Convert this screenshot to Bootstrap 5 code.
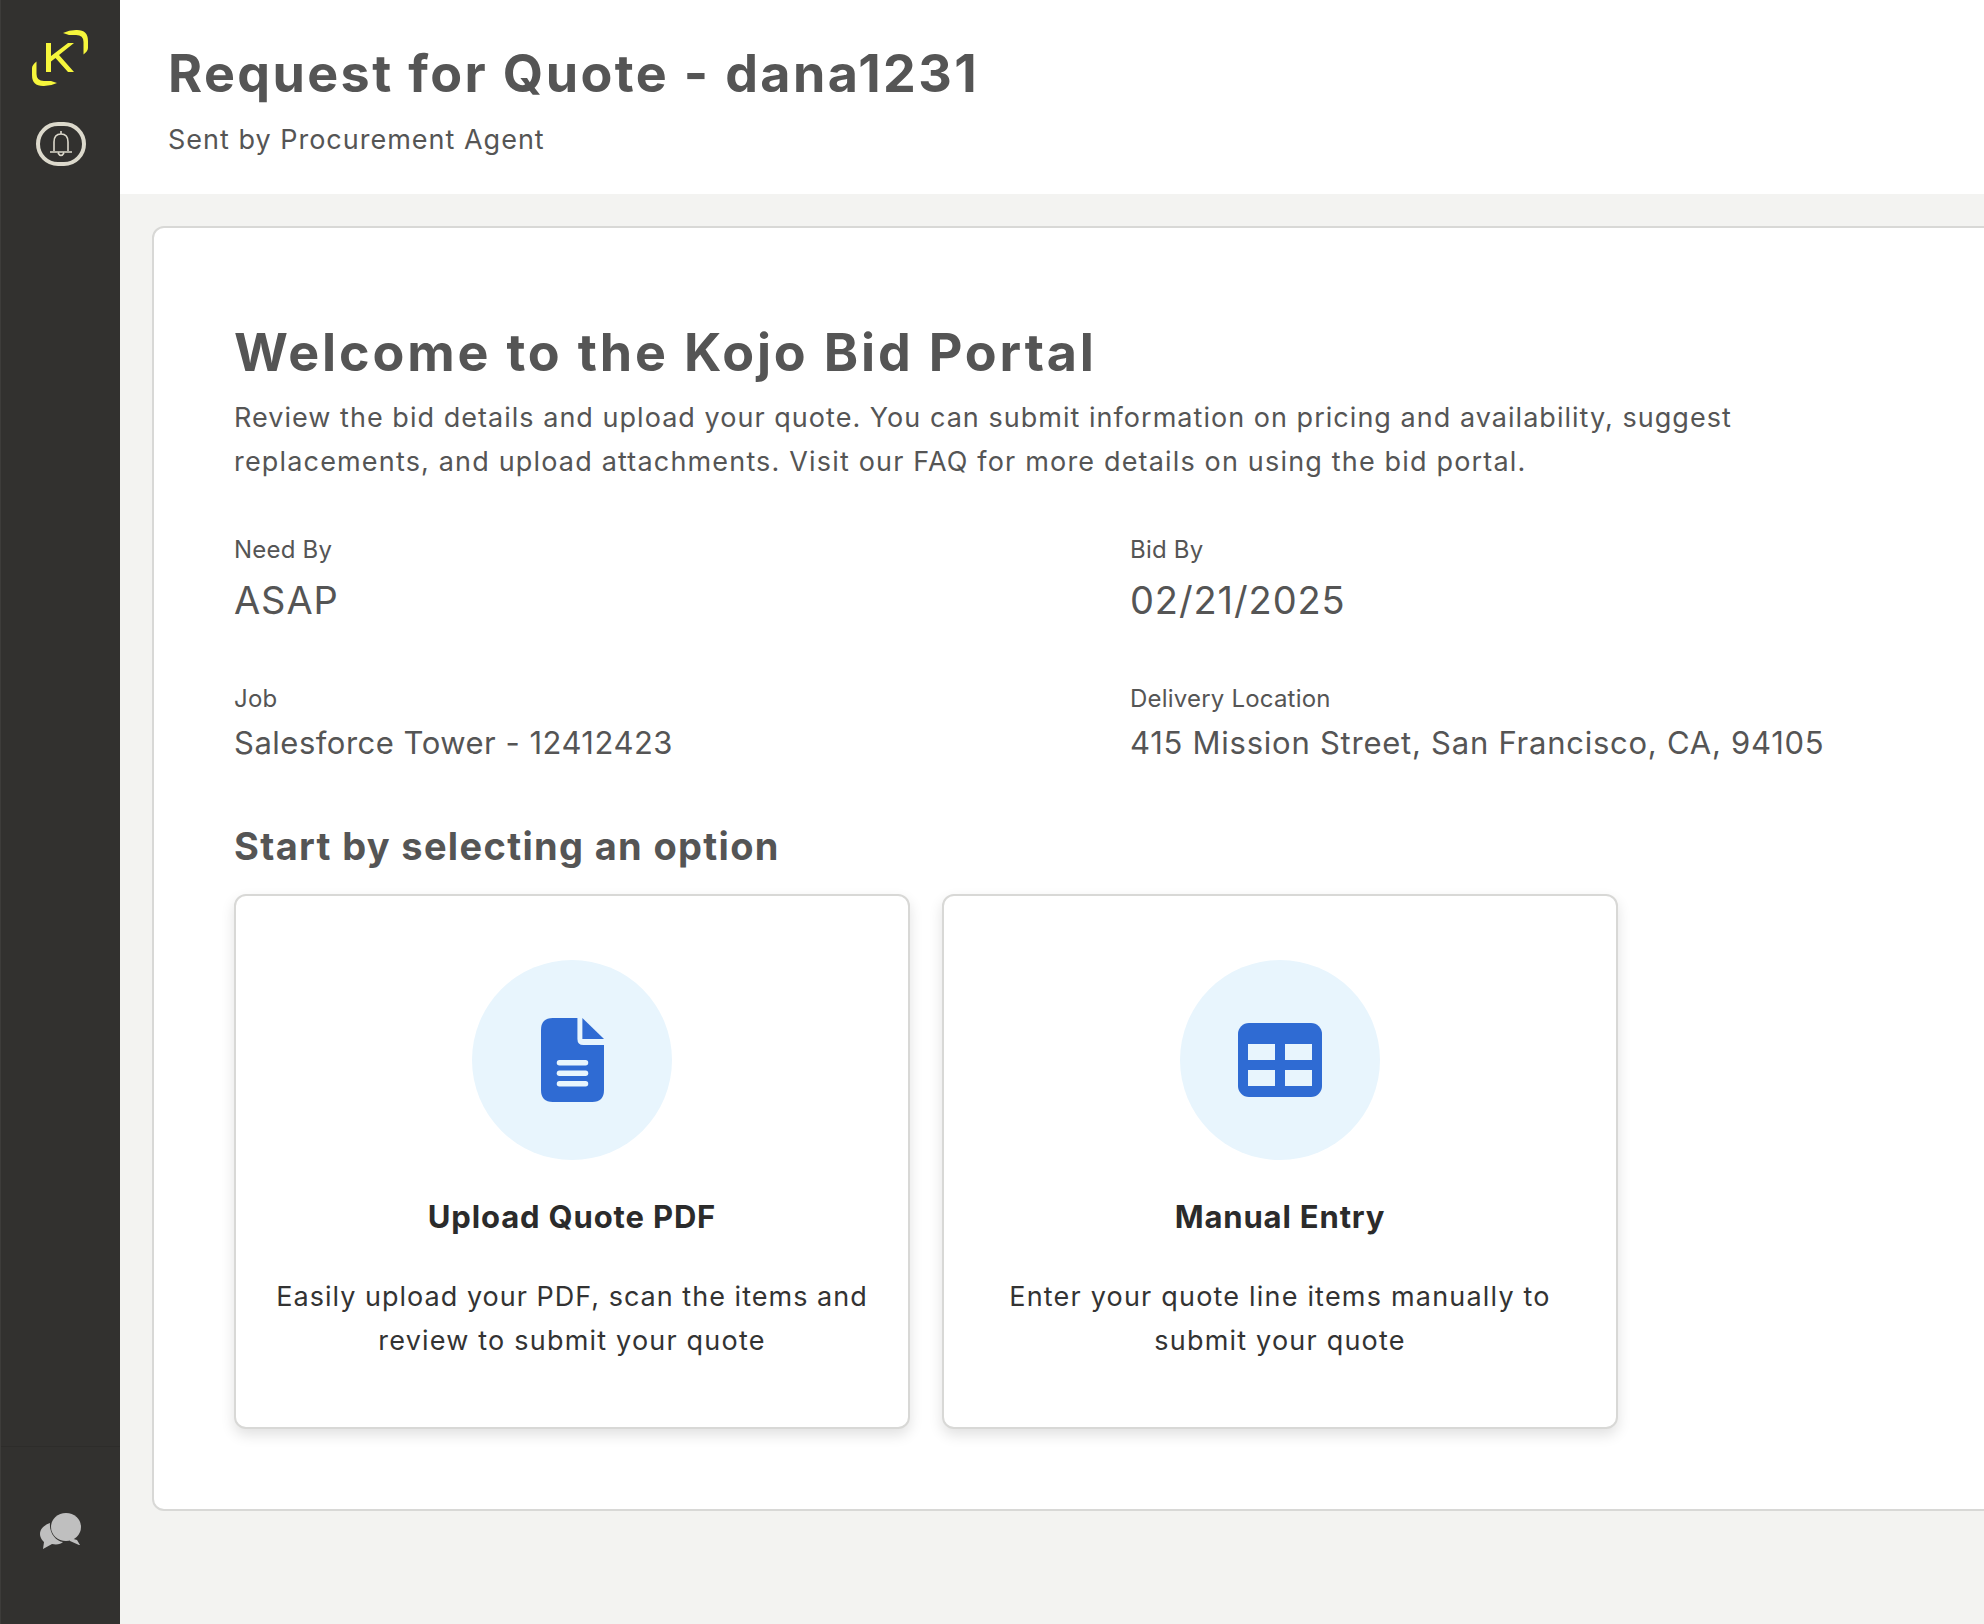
<!DOCTYPE html>
<html lang="en"><head><meta charset="utf-8"><title>Request for Quote</title>
<link href="https://cdn.jsdelivr.net/npm/bootstrap@5.3.0/dist/css/bootstrap.min.css" rel="stylesheet">
<style>
html,body{height:100%}
body{font-family:"Inter","Liberation Sans",sans-serif;background:#f3f3f1;color:#555;overflow:hidden}
.shell{height:1624px;width:1984px;overflow:hidden}
.rail{width:120px;flex:none;background:#32312f;border-left:1px solid #3d3c3a}
.rail-top{padding-top:28px;height:1447px;border-bottom:1px solid #2d2c2a}
.rail-logo{width:60px;height:60px;display:block}
.rail-bell{width:50px;height:44px;border:4px solid #dcd9cc;border-radius:22px;margin-top:34px}
.rail-foot{padding-top:66px}
.top-bar{height:194px;background:#fff;padding:40px 0 0 48px}
.top-title{font-size:52px;font-weight:700;line-height:68px;margin:0;color:#555;letter-spacing:2.4px}
.top-sub{font-size:27px;line-height:36px;margin:14px 0 0;letter-spacing:1px}
.stage{padding:32px 0 0 32px;overflow:hidden}
.panel{width:1954px;height:1285px;background:#fff;border:2px solid #d8d8d6;border-radius:12px;padding:90px 78px 0 80px}
.panel-title{font-size:52px;font-weight:700;line-height:70px;margin:0;color:#555;letter-spacing:2.85px}
.panel-copy{font-size:27px;line-height:44px;margin:8px 0 0;width:1560px;letter-spacing:1.03px}
.copy-wide{letter-spacing:1.17px}
.fact-grid{margin-top:50px}
.fact-cell{width:896px}
.fact-label{font-size:24px;line-height:32px;margin-bottom:9px;letter-spacing:.2px}
.fact-big{font-size:38px;line-height:50px;letter-spacing:.9px}
.fact-mid{font-size:31px;line-height:38px;letter-spacing:.75px}
.fact-job{letter-spacing:.5px}
.fact-row2{margin-top:58px}
.pick-title{font-size:38px;font-weight:700;line-height:52px;margin:58px 0 0;color:#555;letter-spacing:1.33px}
.pick-row{margin-top:22px;gap:32px}
.pick{width:676px;height:535px;background:#fff;border:2px solid #d8d8d6;border-radius:12px;box-shadow:0 6px 14px rgba(0,0,0,.12);padding:64px 30px 0;text-align:center}
.pick-disc{width:200px;height:200px;border-radius:50%;background:#e8f5fd}
.pick-name{font-size:31px;font-weight:700;color:#2b2b2b;line-height:44px;margin:35px 0 0;letter-spacing:.85px}
.pick-copy{font-size:27px;line-height:44px;color:#333;margin:36px 0 0;letter-spacing:1.02px}
.pick-copy-wide{letter-spacing:1.2px}
</style></head><body>
<div class="shell d-flex">
<aside class="rail d-flex flex-column">
<div class="rail-top d-flex flex-column align-items-center">
<svg class="rail-logo" viewBox="0 0 60 60"><g fill="#f6f63c"><path d="M32 5Q38 2 45 2H46Q57 2 57 13V20Q57 23 52.500 26.500V14Q52.500 7 45 7H38Z"/><path d="M32 5Q38 2 45 2H46Q57 2 57 13V20Q57 23 52.500 26.500V14Q52.500 7 45 7H38Z" transform="rotate(180 29 30)"/><path d="M15 15h5v13L37 15h6L28 27l15 17h-6L24.500 30 20 33.500V44h-5z"/></g></svg>
<div class="rail-bell d-flex align-items-center justify-content-center">
<svg width="24" height="28" viewBox="0 0 24 28" fill="none" stroke="#dcd9cc" stroke-width="1.6"><path d="M12 1v3M5 21V12q0-8 7-8t7 8v9M1 22h22M9 23q3 5 6 0"/></svg>
</div></div>
<div class="rail-foot d-flex justify-content-center">
<svg width="42" height="38" viewBox="0 0 42 38"><path fill="#bfbfbf" d="M10 10C4 12 0 16 0 21c0 4 3 7 4 8l-1 7 9-5c5 1 9 0 11-2C16 28 9 20 10 10z"/><ellipse cx="26" cy="14" rx="15" ry="14" fill="#bfbfbf"/><path fill="#bfbfbf" d="M30 25l7 2 3 5-1 0-9-4z"/></svg>
</div>
</aside>
<main class="flex-grow-1 d-flex flex-column overflow-hidden">
<header class="top-bar">
<h1 class="top-title">Request for Quote - dana1231</h1>
<p class="top-sub">Sent by Procurement Agent</p>
</header>
<section class="stage">
<div class="panel">
<h2 class="panel-title">Welcome to the Kojo Bid Portal</h2>
<p class="panel-copy">Review the bid details and upload your quote. You can submit information on pricing and availability, suggest <span class="copy-wide">replacements, and upload attachments. Visit our FAQ for more details on using the bid portal.</span></p>
<div class="fact-grid">
<div class="d-flex"><div class="fact-cell"><div class="fact-label">Need By</div><div class="fact-big">ASAP</div></div><div class="fact-cell"><div class="fact-label">Bid By</div><div class="fact-big">02/21/2025</div></div></div>
<div class="d-flex fact-row2"><div class="fact-cell"><div class="fact-label">Job</div><div class="fact-mid fact-job">Salesforce Tower - 12412423</div></div><div class="fact-cell"><div class="fact-label">Delivery Location</div><div class="fact-mid">415 Mission Street, San Francisco, CA, 94105</div></div></div>
</div>
<h3 class="pick-title">Start by selecting an option</h3>
<div class="d-flex pick-row">
<div class="pick">
<div class="pick-disc mx-auto d-flex align-items-center justify-content-center">
<svg width="63" height="84" viewBox="0 0 64 84" preserveAspectRatio="none"><path fill="#2f6bd3" d="M12 0h25v21q0 6 6 6h21v45q0 12-12 12H12Q0 84 0 72V12Q0 0 12 0z"/><path fill="#2f6bd3" d="M42 0l22 21H42z"/><g fill="#e8f5fd"><rect x="16" y="42" width="32" height="5.5" rx="2.7"/><rect x="16" y="52.500" width="32" height="5.500" rx="2.700"/><rect x="16" y="63" width="32" height="5.500" rx="2.700"/></g></svg>
</div>
<div class="pick-name">Upload Quote PDF</div>
<p class="pick-copy">Easily upload your PDF, scan the items and <span class="pick-copy-wide">review to submit your quote</span></p>
</div>
<div class="pick">
<div class="pick-disc mx-auto d-flex align-items-center justify-content-center">
<svg width="84" height="74" viewBox="0 0 84 74"><rect width="84" height="74" rx="11" fill="#2f6bd3"/><g fill="#e8f5fd"><rect x="10" y="21" width="27" height="16"/><rect x="47" y="21" width="27" height="16"/><rect x="10" y="47" width="27" height="16"/><rect x="47" y="47" width="27" height="16"/></g></svg>
</div>
<div class="pick-name">Manual Entry</div>
<p class="pick-copy pick-copy-wide">Enter your quote line items manually to submit your quote</p>
</div>
</div>
</div>
</section>
</main>
</div>
<script src="https://cdn.jsdelivr.net/npm/bootstrap@5.3.0/dist/js/bootstrap.bundle.min.js"></script>
</body></html>
